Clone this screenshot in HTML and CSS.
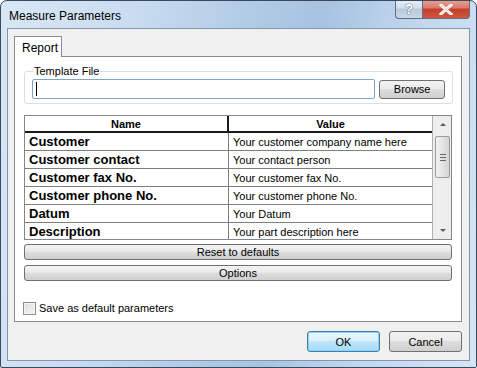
FILE: index.html
```html
<!DOCTYPE html>
<html lang="en">
<head>
  <meta charset="UTF-8">
  <title>Measure Parameters</title>
  <link rel="stylesheet" href="styles.css">
</head>
<body>
  <div class="window">
    <div class="titlebar">
      <span class="title">Measure Parameters</span>
      <div class="caption-btns">
        <div class="cap help">?</div>
        <div class="cap close">
          <svg width="14" height="11" viewBox="0 0 14 11"><path d="M2 1 L12 10 M12 1 L2 10" stroke="#fff" stroke-width="3" stroke-linecap="square"/><path d="M2 1 L12 10 M12 1 L2 10" stroke="#5a2a22" stroke-width="0.6" opacity="0.4"/></svg>
        </div>
      </div>
    </div>

    <div class="client">
      <div class="tabs">
        <div class="tab">Report</div>
      </div>
      <div class="panel">
        <div class="group">
          <span class="legend">Template File</span>
          <div class="file-row">
            <div class="input"><span class="caret"></span></div>
            <button class="btn browse">Browse</button>
          </div>
        </div>

        <div class="grid">
          <div class="grid-body">
            <div class="row head">
              <div class="c name">Name</div>
              <div class="c value">Value</div>
            </div>
            <div class="row"><div class="c name">Customer</div><div class="c value">Your customer company name here</div></div>
            <div class="row"><div class="c name">Customer contact</div><div class="c value">Your contact person</div></div>
            <div class="row"><div class="c name">Customer fax No.</div><div class="c value">Your customer fax No.</div></div>
            <div class="row"><div class="c name">Customer phone No.</div><div class="c value">Your customer phone No.</div></div>
            <div class="row"><div class="c name">Datum</div><div class="c value">Your Datum</div></div>
            <div class="row"><div class="c name">Description</div><div class="c value">Your part description here</div></div>
          </div>
          <div class="scrollbar">
            <div class="arrow up"></div>
            <div class="thumb"><span></span><span></span><span></span></div>
            <div class="track"></div>
            <div class="arrow down"></div>
          </div>
        </div>

        <button class="btn wide reset">Reset to defaults</button>
        <button class="btn wide">Options</button>

        <label class="check">
          <span class="box"></span>
          Save as default parameters
        </label>
      </div>

      <div class="footer">
        <button class="btn dlg ok">OK</button>
        <button class="btn dlg">Cancel</button>
      </div>
    </div>
  </div>
</body>
</html>
```

FILE: styles.css
```css
html, body {
  margin: 0;
  padding: 0;
  background: #fff;
}

body {
  font-family: "Liberation Sans", Arial, sans-serif;
  font-size: 11px;
  color: #000;
}

.window {
  width: 477px;
  height: 368px;
  box-sizing: border-box;
  border: 1px solid #3a4a5e;
  border-radius: 7px 7px 2px 2px;
  background: linear-gradient(100deg, #d9e7f5 0%, #c9dcf0 25%, #b3cce6 45%, #a7c3e1 60%, #c2d7ed 78%, #d6e5f4 100%);
  display: flex;
  flex-direction: column;
  overflow: hidden;
}

.titlebar {
  height: 28px;
  display: flex;
  justify-content: space-between;
  align-items: flex-start;
}

.title {
  padding: 8px 0 0 8px;
  font-size: 12px;
  color: #000;
}

.caption-btns {
  display: flex;
  margin-right: 6px;
  margin-top: -1px;
}

.cap {
  height: 19px;
  box-sizing: border-box;
  border: 1px solid #5e6f86;
  border-top: none;
  display: flex;
  align-items: center;
  justify-content: center;
}

.help {
  width: 27px;
  border-right: none;
  border-radius: 0 0 0 4px;
  background: linear-gradient(#e6eef7 0%, #d2deea 45%, #b7c8da 50%, #c9d8e6 100%);
  color: #fff;
  font-weight: bold;
  font-size: 14px;
  text-shadow: 0 0 1px #3b4a5c, 0 0 1px #3b4a5c;
}

.close {
  width: 48px;
  border-radius: 0 0 4px 0;
  background: linear-gradient(#e8a493 0%, #d9786a 45%, #c2402a 50%, #d0573f 100%);
}

.client {
  flex: 1;
  margin: 0 6px 6px 6px;
  border: 1px solid #8196ad;
  background: #f0f0f0;
  padding: 7px 7px 8px 6px;
  display: flex;
  flex-direction: column;
}

.tabs {
  display: flex;
  height: 21px;
}

.tab {
  width: 48px;
  box-sizing: border-box;
  border: 1px solid #898c95;
  border-bottom: none;
  background: #fff;
  padding: 4px 0 0 7px;
  font-size: 12px;
  position: relative;
  z-index: 1;
  height: 21px;
}

.panel {
  border: 1px solid #898c95;
  background: #fff;
  height: 266px;
  box-sizing: border-box;
  margin-top: -1px;
  padding: 14px 8px 0 9px;
}

.group {
  border: 1px solid #d5dfe5;
  border-radius: 3px;
  padding: 7px 7px 4px 7px;
}

.legend {
  display: block;
  width: max-content;
  margin: -15px 0 1px 1px;
  padding: 0 1px;
  background: #fff;
  line-height: 14px;
}

.file-row {
  display: flex;
  align-items: center;
}

.input {
  width: 345px;
  height: 20px;
  box-sizing: border-box;
  border: 1px solid #7ea6cd;
  border-radius: 2px;
  background: #fff;
  padding: 2px 3px;
}

.caret {
  display: block;
  width: 1px;
  height: 14px;
  background: #000;
}

.btn {
  font-family: "Liberation Sans", Arial, sans-serif;
  font-size: 11px;
  color: #000;
  border: 1px solid #707070;
  border-radius: 3px;
  background: linear-gradient(#f2f2f2 0%, #ebebeb 45%, #dddddd 50%, #cfcfcf 100%);
  padding: 0;
  box-sizing: border-box;
}

.browse {
  width: 66px;
  height: 19px;
  margin-left: 4px;
}

.grid {
  margin-top: 11px;
  width: 428px;
  height: 125px;
  box-sizing: border-box;
  border: 1px solid #828790;
  display: flex;
  overflow: hidden;
}

.grid-body {
  width: 407px;
  border-right: 1px solid #b0b0b0;
}

.row {
  display: flex;
  height: 18px;
  box-sizing: border-box;
  border-bottom: 1px solid #808080;
}

.row .c {
  box-sizing: border-box;
  overflow: hidden;
  white-space: nowrap;
}

.row .name {
  width: 204px;
  border-right: 1px solid #808080;
  font-weight: bold;
  font-size: 13px;
  padding: 1px 0 0 4px;
}

.row .value {
  flex: 1;
  font-size: 11px;
  padding: 3px 0 0 4px;
}

.row.head {
  height: 17px;
  border-bottom: 2px solid #1a1a1a;
  background: #fff;
}

.row.head .c {
  font-size: 11px;
  font-weight: bold;
  text-align: center;
  padding: 2px 0 0 0;
}

.row.head .name {
  border-right: 2px solid #1a1a1a;
}

.scrollbar {
  width: 17px;
  background: #ededed;
  display: flex;
  flex-direction: column;
  padding-left: 1px;
}

.arrow {
  height: 17px;
  position: relative;
}

.arrow::after {
  content: "";
  position: absolute;
  left: 6px;
  border-left: 3px solid transparent;
  border-right: 3px solid transparent;
}

.arrow.up::after {
  top: 7px;
  border-bottom: 3px solid #5a5a5a;
}

.arrow.down::after {
  top: 7px;
  border-top: 3px solid #5a5a5a;
}

.thumb {
  height: 40px;
  margin: 3px 1px 0 1px;
  border: 1px solid #9a9a9a;
  border-radius: 2px;
  background: linear-gradient(90deg, #f3f3f3, #e3e3e3 50%, #d4d4d4);
  display: flex;
  flex-direction: column;
  justify-content: center;
  align-items: center;
  gap: 2px;
}

.thumb span {
  width: 6px;
  height: 1px;
  background: #666;
}

.track {
  flex: 1;
}

.wide {
  display: block;
  width: 428px;
  height: 16px;
  margin-top: 5px;
  font-size: 11px;
}

.wide.reset {
  margin-top: 4px;
}

.check {
  display: flex;
  align-items: center;
  margin-top: 21px;
  margin-left: -1px;
  font-size: 11px;
  line-height: 13px;
}

.box {
  width: 13px;
  height: 13px;
  box-sizing: border-box;
  border: 1px solid #8e8f8f;
  background: linear-gradient(135deg, #dcdcdc, #f6f6f6);
  box-shadow: inset 0 0 0 1px #f4f4f4;
  margin-right: 3px;
}

.footer {
  display: flex;
  justify-content: flex-end;
  gap: 9px;
  margin-top: 9px;
}

.dlg {
  width: 73px;
  height: 21px;
}

.ok {
  border-color: #3c7fb1;
  background: linear-gradient(#eaf6fd 0%, #d9f0fc 45%, #bee6fd 50%, #a7d9f5 100%);
  box-shadow: inset 0 0 0 1px #8fd1f3;
}
```
